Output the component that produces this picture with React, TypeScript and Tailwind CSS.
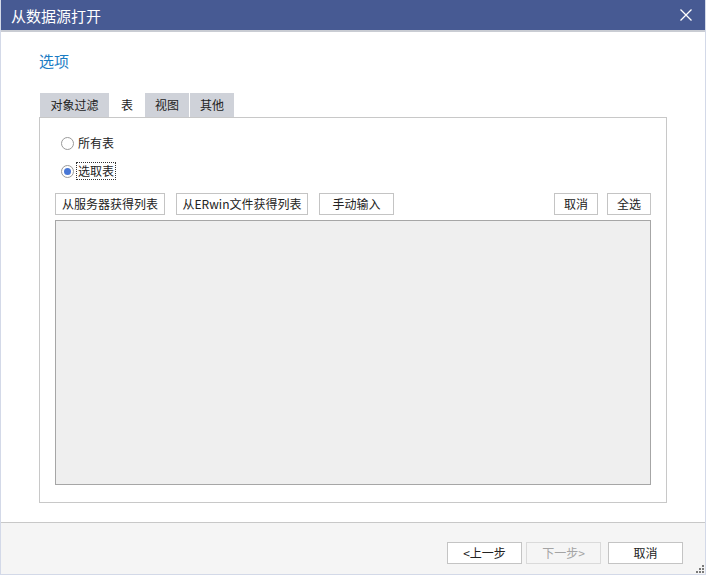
import React from "react";

const font = { fontFamily: '"Noto Sans CJK SC", "Noto Sans", sans-serif' };

function Btn({ children, className = "" }: { children: React.ReactNode; className?: string }) {
  return (
    <div
      className={`h-[22px] flex items-center justify-center border border-[#c4c4c4] bg-white text-[12px] text-[#222] leading-none ${className}`}
    >
      {children}
    </div>
  );
}

export default function App() {
  return (
    <div
      className="w-[706px] h-[575px] flex flex-col bg-white border-l border-r border-b border-[#d3d9e8] overflow-hidden relative"
      style={font}
    >
      {/* title bar */}
      <div className="h-[30px] bg-[#475a93] flex items-center justify-between pl-[11px] pr-[14px] shrink-0 -mx-px">
        <span className="text-white text-[15px] leading-none">从数据源打开</span>
        <svg width="12" height="12" viewBox="0 0 12 12">
          <path d="M0.5 0.5 L11.5 11.5 M11.5 0.5 L0.5 11.5" stroke="white" strokeWidth="1.3" />
        </svg>
      </div>
      <div className="h-[2px] bg-[#c9ccd3] shrink-0" />

      {/* content */}
      <div className="flex-1 flex flex-col pl-[38px] pr-[38px] pt-[18px] pb-[19px]">
        <div className="text-[15px] leading-[22px] text-[#1b7cc4] h-[22px]">选项</div>
        <div className="mt-[21px] flex gap-px pl-px">
          <div className="w-[69px] h-[24px] bg-[#cfd2d9] flex items-center justify-center text-[12px] text-[#222]">对象过滤</div>
          <div className="w-[34px] h-[24px] bg-white flex items-center justify-center text-[12px] text-[#222]">表</div>
          <div className="w-[44px] h-[24px] bg-[#cfd2d9] flex items-center justify-center text-[12px] text-[#222]">视图</div>
          <div className="w-[44px] h-[24px] bg-[#cfd2d9] flex items-center justify-center text-[12px] text-[#222]">其他</div>
        </div>
        <div className="flex-1 border border-[#c8c8c8] flex flex-col px-[15px] pt-[18px] pb-[17px]">
          <div className="flex items-center gap-[4px] pl-[6px] h-[14px]">
            <div className="w-[13px] h-[13px] rounded-full border border-[#9a9a9a] bg-white" />
            <span className="text-[12px] text-[#222] leading-none">所有表</span>
          </div>
          <div className="flex items-center gap-[2px] pl-[6px] mt-[12px] h-[18px]">
            <div className="w-[13px] h-[13px] rounded-full border border-[#9a9a9a] bg-white flex items-center justify-center">
              <div className="w-[7px] h-[7px] rounded-full bg-[#4877d6]" />
            </div>
            <span className="text-[12px] text-[#222] leading-none border border-dotted border-[#333] px-px py-[2px]">选取表</span>
          </div>
          <div className="flex mt-[13px]">
            <Btn className="w-[110px]">从服务器获得列表</Btn>
            <Btn className="w-[132px] ml-[11px]">从ERwin文件获得列表</Btn>
            <Btn className="w-[75px] ml-[11px]">手动输入</Btn>
            <div className="flex-1" />
            <Btn className="w-[44px]">取消</Btn>
            <Btn className="w-[44px] ml-[9px]">全选</Btn>
          </div>
          <div className="flex-1 mt-[5px] bg-[#efefef] border border-[#a6a6a6]" />
        </div>
      </div>

      {/* footer */}
      <div className="h-[52px] shrink-0 bg-[#f5f5f5] border-t border-[#c8c8c8] flex items-start justify-end pr-[22px] pt-[19px]">
        <Btn className="w-[75px]">&lt;上一步</Btn>
        <div className="w-[75px] h-[22px] ml-[4px] flex items-center justify-center border border-[#dadada] bg-[#f5f5f5] text-[12px] text-[#a4a4a4] leading-none">
          下一步&gt;
        </div>
        <Btn className="w-[75px] ml-[7px]">取消</Btn>
      </div>

      {/* resize grip */}
      <svg className="absolute right-[1px] bottom-[1px]" width="10" height="10" viewBox="0 0 10 10">
        <rect x="8" y="2" width="2" height="2" fill="#7a7a7a" />
        <rect x="5" y="5" width="2" height="2" fill="#7a7a7a" />
        <rect x="8" y="5" width="2" height="2" fill="#7a7a7a" />
        <rect x="2" y="8" width="2" height="2" fill="#7a7a7a" />
        <rect x="5" y="8" width="2" height="2" fill="#7a7a7a" />
        <rect x="8" y="8" width="2" height="2" fill="#7a7a7a" />
      </svg>
    </div>
  );
}
